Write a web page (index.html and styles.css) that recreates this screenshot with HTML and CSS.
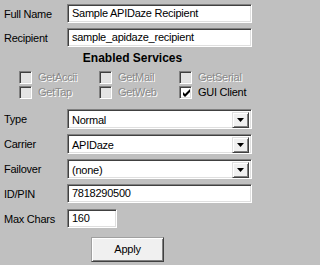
FILE: index.html
```html
<!DOCTYPE html>
<html>
<head>
<meta charset="utf-8">
<link rel="stylesheet" href="styles.css">
</head>
<body>
<div class="panel">
  <div class="row r1">
    <span class="lbl">Full Name</span>
    <div class="field wide">Sample APIDaze Recipient</div>
  </div>
  <div class="row r2">
    <span class="lbl">Recipient</span>
    <div class="field wide">sample_apidaze_recipient</div>
  </div>
  <div class="heading">Enabled Services</div>
  <div class="checks">
    <div class="chk dis"><span class="box"></span><span class="ct">GetAccii</span></div>
    <div class="chk dis"><span class="box"></span><span class="ct">GetMail</span></div>
    <div class="chk dis"><span class="box"></span><span class="ct">GetSerial</span></div>
    <div class="chk dis"><span class="box"></span><span class="ct">GetTap</span></div>
    <div class="chk dis"><span class="box"></span><span class="ct">GetWeb</span></div>
    <div class="chk on"><span class="box"><svg width="9" height="9" viewBox="0 0 9 9"><path d="M1 3v3l2 2 5-5V0L3 5z" fill="#000"/></svg></span><span class="ct">GUI Client</span></div>
  </div>
  <div class="row sel first">
    <span class="lbl">Type</span>
    <div class="select"><span class="val">Normal</span><span class="btn"><svg width="7" height="4" viewBox="0 0 7 4"><path d="M0 0h7L3.5 4z" fill="#000"/></svg></span></div>
  </div>
  <div class="row sel">
    <span class="lbl">Carrier</span>
    <div class="select"><span class="val">APIDaze</span><span class="btn"><svg width="7" height="4" viewBox="0 0 7 4"><path d="M0 0h7L3.5 4z" fill="#000"/></svg></span></div>
  </div>
  <div class="row sel">
    <span class="lbl">Failover</span>
    <div class="select"><span class="val">(none)</span><span class="btn"><svg width="7" height="4" viewBox="0 0 7 4"><path d="M0 0h7L3.5 4z" fill="#000"/></svg></span></div>
  </div>
  <div class="row r-id">
    <span class="lbl">ID/PIN</span>
    <div class="field wide">7818290500</div>
  </div>
  <div class="row r-max">
    <span class="lbl">Max Chars</span>
    <div class="field short">160</div>
  </div>
  <div class="actions">
    <div class="apply">Apply</div>
  </div>
</div>
</body>
</html>
```

FILE: styles.css
```css
html, body {
  margin: 0;
  padding: 0;
  background: #c0c0c0;
}
body {
  width: 260px;
  height: 265px;
  overflow: hidden;
  font-family: "Liberation Sans", Arial, sans-serif;
  font-size: 11px;
  letter-spacing: -0.25px;
  color: #000;
}
.panel {
  display: flex;
  flex-direction: column;
  padding: 4px 0 0 0;
}
.row {
  display: flex;
  align-items: center;
  height: 19px;
}
.r2 { margin-top: 5px; }
.lbl {
  width: 63px;
  padding-left: 4px;
  flex: none;
}
.field {
  box-sizing: border-box;
  height: 19px;
  background: #fff;
  border-top: 1px solid #808080;
  border-left: 1px solid #808080;
  border-right: 1px solid #fff;
  border-bottom: 1px solid #fff;
  box-shadow: inset 1px 1px 0 #404040, inset -1px -1px 0 #dfdfdf;
  padding: 0 0 0 4px;
  line-height: 17px;
  white-space: nowrap;
  overflow: hidden;
}
.wide { width: 185px; }
.short { width: 50px; }
.heading {
  margin-top: 4px;
  height: 14px;
  line-height: 14px;
  font-weight: bold;
  font-size: 12px;
  letter-spacing: 0;
  text-align: center;
  padding-left: 5px;
}
.checks {
  display: grid;
  grid-template-columns: 80px 80px 80px;
  row-gap: 2px;
  padding-left: 19px;
  margin-top: 6px;
}
.chk {
  display: flex;
  align-items: center;
  height: 13px;
}
.box {
  box-sizing: border-box;
  width: 13px;
  height: 13px;
  flex: none;
  border-top: 1px solid #808080;
  border-left: 1px solid #808080;
  border-right: 1px solid #fff;
  border-bottom: 1px solid #fff;
  box-shadow: inset 1px 1px 0 #404040, inset -1px -1px 0 #dfdfdf;
  display: flex;
  align-items: center;
  justify-content: center;
}
.dis .box { background: #e4e4e4; }
.on .box { background: #fff; }
.on .box svg { margin: 1px 0 0 1px; }
.ct {
  margin-left: 6px;
  line-height: 13px;
}
.dis .ct {
  color: #8a8a8a;
  text-shadow: 1px 1px 0 #fff;
}
.sel {
  height: 20px;
  margin-top: 5px;
}
.sel.first { margin-top: 10px; }
.select {
  box-sizing: border-box;
  width: 185px;
  height: 20px;
  background: #fff;
  border-top: 1px solid #808080;
  border-left: 1px solid #808080;
  border-right: 1px solid #fff;
  border-bottom: 1px solid #fff;
  box-shadow: inset 1px 1px 0 #404040, inset -1px -1px 0 #dfdfdf;
  display: flex;
  align-items: center;
  padding: 2px 2px 1px 4px;
}
.val {
  flex: 1;
  line-height: 16px;
}
.btn {
  box-sizing: border-box;
  width: 17px;
  height: 16px;
  background: #f0f0f0;
  border-top: 1px solid #dfdfdf;
  border-left: 1px solid #dfdfdf;
  border-right: 1px solid #404040;
  border-bottom: 1px solid #404040;
  box-shadow: inset 1px 1px 0 #fff, inset -1px -1px 0 #808080;
  display: flex;
  align-items: center;
  justify-content: center;
}
.btn svg { margin-top: 1px; }
.r-id { margin-top: 5px; }
.r-max { margin-top: 6px; }
.actions {
  display: flex;
  padding-left: 91px;
  margin-top: 9px;
}
.apply {
  box-sizing: border-box;
  width: 73px;
  height: 25px;
  background: #f0f0f0;
  border-top: 1px solid #a0a0a0;
  border-left: 1px solid #a0a0a0;
  border-right: 1px solid #404040;
  border-bottom: 1px solid #404040;
  box-shadow: inset 1px 1px 0 #fff, inset -1px -1px 0 #808080;
  text-align: center;
  line-height: 23px;
  font-size: 11px;
}
```
